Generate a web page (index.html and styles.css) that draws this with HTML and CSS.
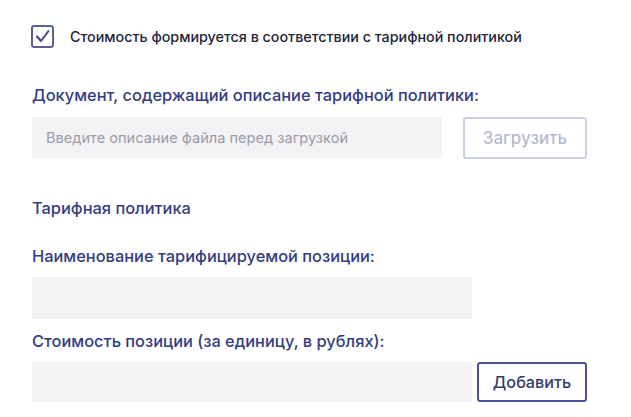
FILE: index.html
```html
<!DOCTYPE html>
<html lang="ru">
<head>
    <meta charset="UTF-8"/>
    <title>Тарифная политика</title>
    <link rel="stylesheet" href="styles.css">
</head>
<body>
<div class="page">
    <label class="chk">
        <span class="chkBox">
            <svg width="17" height="17" viewBox="0 0 17 17">
                <path d="M3 8.5 L7 13 L14.5 3" fill="none" stroke="#3d4590" stroke-width="2" stroke-linecap="round" stroke-linejoin="round"/>
            </svg>
        </span>
        <span class="chkText">Стоимость формируется в соответствии с тарифной политикой</span>
    </label>

    <div class="lbl lblDoc">Документ, содержащий описание тарифной политики:</div>
    <div class="row rowUpload">
        <div class="field fieldDoc">
            <input class="ipt" type="text" placeholder="Введите описание файла перед загрузкой"/>
        </div>
        <button class="btn btnOff" disabled>Загрузить</button>
    </div>

    <div class="lbl lblSection">Тарифная политика</div>

    <div class="lbl lblName">Наименование тарифицируемой позиции:</div>
    <div class="field fieldName">
        <input class="ipt" type="text"/>
    </div>

    <div class="lbl lblPrice">Стоимость позиции (за единицу, в рублях):</div>
    <div class="row rowAdd">
        <div class="field fieldPrice">
            <input class="ipt" type="text"/>
        </div>
        <button class="btn btnAdd">Добавить</button>
    </div>
</div>
</body>
</html>
```

FILE: styles.css
```css
body {
    margin: 0;
    background: #ffffff;
    font-family: Inter, "Noto Sans", sans-serif;
}

.page {
    padding: 25px 0 0 31px;
}

.chk {
    display: flex;
    align-items: center;
    height: 23px;
}

.chkBox {
    width: 19px;
    height: 19px;
    border: 2px solid #5b6090;
    border-radius: 3px;
    display: flex;
    align-items: center;
    justify-content: center;
}

.chkText {
    margin-left: 16px;
    font-size: 14.3px;
    font-weight: 500;
    color: #23243a;
}

.lbl {
    font-size: 16.4px;
    line-height: 20px;
    font-weight: 500;
    color: #343d82;
    margin-left: 1px;
}

.lblDoc {
    margin-top: 37px;
}

.lblSection {
    margin-top: 39px;
}

.lblName {
    margin-top: 28px;
}

.lblPrice {
    margin-top: 12px;
}

.row {
    display: flex;
    align-items: flex-start;
    margin-left: 1px;
}

.rowUpload {
    margin-top: 12px;
    gap: 21px;
}

.rowAdd {
    margin-top: 11px;
    gap: 5px;
}

.field {
    display: flex;
    align-items: center;
    box-sizing: border-box;
    padding-left: 14px;
    padding-right: 14px;
    border-radius: 2px;
    background: #f3f3f6;
}

.fieldDoc {
    width: 410px;
    height: 41px;
}

.fieldName {
    width: 440px;
    height: 42px;
    margin-top: 11px;
    margin-left: 1px;
}

.fieldPrice {
    width: 440px;
    height: 40px;
}

.ipt {
    flex: 1;
    min-width: 0;
    border: 0;
    padding: 0;
    background: transparent;
    font-family: Inter, "Noto Sans", sans-serif;
    font-size: 14.6px;
    outline: none;
}

.ipt::placeholder {
    color: #9b9ba6;
}

.btn {
    box-sizing: border-box;
    background: #ffffff;
    border-radius: 3px;
    font-family: Inter, "Noto Sans", sans-serif;
    font-weight: 500;
    padding: 0;
}

.btnOff {
    width: 124px;
    height: 42px;
    border: 2px solid #ccd0e4;
    color: #b6bacf;
    font-size: 17px;
}

.btnAdd {
    width: 110px;
    height: 40px;
    border: 2px solid #4b5396;
    color: #363c6e;
    font-size: 16.2px;
}
```
